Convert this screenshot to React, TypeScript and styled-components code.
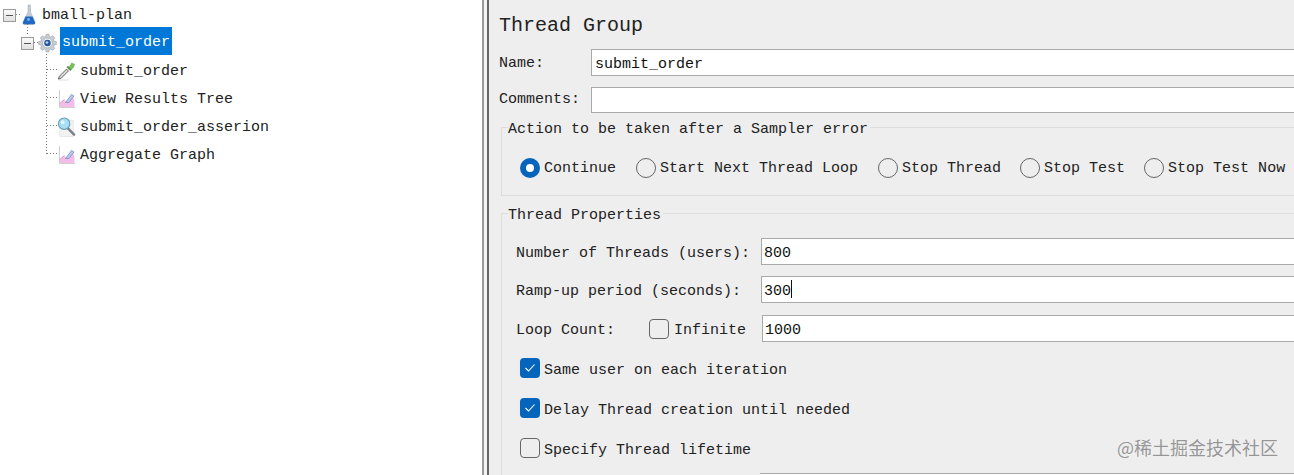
import React from 'react';
import styled, { createGlobalStyle } from 'styled-components';

const Global = createGlobalStyle`
  html, body { margin: 0; padding: 0; width: 1294px; height: 475px; overflow: hidden; background: #fff; }
  * { box-sizing: border-box; }
`;
const Page = styled.div`
  display: flex; width: 1294px; height: 475px; overflow: hidden;
  font-family: "Liberation Mono", "DejaVu Sans Mono", monospace; font-size: 15px; color: #222;
`;
const TreePane = styled.div`
  width: 482px; flex: none; background: #fff; padding-top: 1px; position: relative;
`;
const Divider = styled.div`
  width: 7px; flex: none; background: #f4f4f4; border-left: 2px solid #999; border-right: 2px solid #666;
`;
const TreeRow = styled.div<{ $indent: number }>`
  height: 28px; display: flex; align-items: center; padding-left: ${p => p.$indent}px; white-space: nowrap;
`;
const Expander = styled.span<{ $mr: number }>`
  width: 13px; height: 13px; border: 1px solid #9a9a9a; background: linear-gradient(#fafafa, #e0e0e0);
  display: flex; align-items: center; justify-content: center; flex: none; margin-right: ${p => p.$mr}px;
  &::before { content: ''; width: 7px; height: 1px; background: #555; }
`;
const IconBox = styled.span`
  width: 19px; height: 22px; flex: none; display: flex; align-items: center; justify-content: center; margin-right: 4px;
`;
const Selected = styled.span`
  background: #0078d7; color: #fff; height: 28px; line-height: 32px; padding: 0 2px; margin: -2px 0 0 -1px; align-self: flex-start; overflow: hidden;
`;
const Guides = styled.div`
  position: absolute; left: 0; top: 0; width: 70px; height: 170px; pointer-events: none;
`;
const FormPane = styled.div`
  flex: 1; min-width: 0; background: #eee; padding: 15px 0 0 10px;
`;
const Title = styled.div`
  font-size: 20px; line-height: 22px; height: 22px; color: #222;
`;
const Row = styled.div<{ $mt: number }>`
  display: flex; align-items: center; margin-top: ${p => p.$mt}px;
`;
const Label = styled.span<{ $w: number; $pb?: number; $pt?: number }>`
  width: ${p => p.$w}px; flex: none; white-space: nowrap;
  padding-bottom: ${p => p.$pb ?? 0}px; padding-top: ${p => p.$pt ?? 0}px;
`;
const Field = styled.div<{ $h: number; $pl?: number }>`
  flex: 1; height: ${p => p.$h}px; background: #fff; border: 1px solid #a9a9a9; border-right: none;
  padding-left: ${p => p.$pl ?? 3}px; line-height: ${p => p.$h + 3}px; font-size: 15px; color: #111; white-space: nowrap;
`;
const Caret = styled.span`
  display: inline-block; width: 1px; height: 18px; background: #111; vertical-align: middle; margin-top: -4px;
`;
const Group = styled.div<{ $mt: number; $h: number }>`
  position: relative; margin: ${p => p.$mt}px 0 0 2px; height: ${p => p.$h}px;
  border: 1px solid #ddd; border-right: none;
`;
const Legend = styled.span`
  position: absolute; left: 6px; top: -7px; line-height: 18px; background: #eee; padding-right: 2px; white-space: nowrap; color: #222;
`;
const RadioRow = styled.div`
  display: flex; align-items: center; padding: 30px 0 0 18px; white-space: nowrap;
`;
const RadioItem = styled.label<{ $mr: number }>`
  display: flex; align-items: center; margin-right: ${p => p.$mr}px;
`;
const Radio = styled.span<{ $on?: boolean }>`
  width: 20px; height: 20px; border-radius: 50%; flex: none; margin-right: 4px;
  ${p => p.$on
    ? 'background: #fff; border: 6px solid #0565bd;'
    : 'border: 1px solid #666; background: #eee;'}
`;
const Check = styled.span<{ $on?: boolean }>`
  width: 20px; height: 20px; border-radius: 4px; flex: none; margin-right: 4px;
  display: flex; align-items: center; justify-content: center;
  ${p => p.$on ? 'background: #0565bd;' : 'border: 1px solid #666; background: #eee;'}
`;
const PropRow = styled.div<{ $mt: number }>`
  display: flex; align-items: center; margin-top: ${p => p.$mt}px; padding-left: 14px; white-space: nowrap;
`;
const PropLabel = styled.span`
  width: 245px; flex: none; padding-top: 4px;
`;
const LoopLabel = styled.span`
  width: 133px; flex: none; padding-top: 4px;
`;
const InfiniteLabel = styled.span`
  width: 88px; flex: none; margin-left: 1px; padding-top: 4px;
`;
const CheckRow = styled.div<{ $mt: number }>`
  display: flex; align-items: center; margin-top: ${p => p.$mt}px; padding-left: 18px; white-space: nowrap; height: 20px;
`;
const CheckText = styled.span`
  padding-top: 4px;
`;
const BottomField = styled.div`
  height: 10px; margin: 15px 0 0 258px; background: #fff; border-top: 1px solid #a9a9a9;
`;
const Watermark = styled.span`
  position: absolute; right: 16px; bottom: 16px; font-family: "Noto Sans CJK SC", sans-serif; font-size: 18px; line-height: 24px;
  color: rgba(90,90,90,.6); pointer-events: none;
`;

const Flask = () => (
  <svg width="18" height="22" viewBox="0 0 18 22">
    <path d="M8 1h2.500v7l4.500 10c.5 1.500-.5 2.500-1.500 2.500H4.500c-1 0-2-1-1.500-2.500l5-10z" fill="#c5ccd6" stroke="#a8b0ba" strokeWidth=".6" />
    <path d="M5.500 12.500h7l2.500 6c.3 1-.2 1.700-1 1.700H4c-.8 0-1.300-.7-1-1.700z" fill="#1f68c4" />
    <circle cx="8.500" cy="15.500" r="1.400" fill="#7fb0ea" />
  </svg>
);
const Gear = () => (
  <svg width="20" height="20" viewBox="0 0 20 20">
    <path fill="#c9ced6" stroke="#959ba3" strokeWidth=".6" d="M8.500.8h3l.4 2.300 1.700.7 1.900-1.300 2.100 2.100-1.300 1.900.7 1.700 2.300.4v3l-2.300.4-.7 1.700 1.300 1.900-2.100 2.100-1.900-1.300-1.700.7-.4 2.300h-3l-.4-2.300-1.700-.7-1.900 1.300-2.100-2.100 1.300-1.900-.7-1.700-2.300-.4v-3l2.300-.4.7-1.700-1.300-1.900 2.100-2.100 1.900 1.300 1.700-.7z" />
    <circle cx="10" cy="10" r="5.200" fill="#eef1f5" stroke="#8e949c" strokeWidth=".5" />
    <circle cx="10" cy="10" r="3.400" fill="#27579a" />
    <circle cx="9.500" cy="9.500" r="1.400" fill="#bcd4f0" />
  </svg>
);
const Dropper = () => (
  <svg width="20" height="20" viewBox="0 0 20 20">
    <path d="M1 19.500h11" stroke="#ddd" strokeWidth="1" />
    <path d="M1.500 18.500l1-3L10 8l2 2-7.500 7.500z" fill="#d8d8d8" stroke="#555" strokeWidth=".9" />
    <path d="M10 6l4 4 1.500-1.500-4-4z" fill="#5f8f4a" />
    <path d="M13 5.500l2.500-4 3 1.500-1 3-2.500 2.500z" fill="#79c25a" stroke="#5f9a48" strokeWidth=".5" />
  </svg>
);
const GraphIcon = () => (
  <svg width="18" height="20" viewBox="0 0 18 20">
    <path d="M1.500 1v17.500H17" fill="none" stroke="#cfcfcf" strokeWidth="1" />
    <path d="M2 18v-3.500l4-4 2.500 3 6-7 2 6V18z" fill="#f3bdea" />
    <path d="M2 14.500l4-4" fill="none" stroke="#b678bd" strokeWidth=".8" />
    <path d="M7.500 13.500l6-8 2.500 1.500-5 6.500z" fill="#bcc9ea" stroke="#6c82c0" strokeWidth=".7" />
  </svg>
);
const Magnifier = () => (
  <svg width="20" height="22" viewBox="0 0 20 22">
    <rect x="3" y="4" width="14" height="17" fill="#f2f2f2" stroke="#e0e0e0" strokeWidth=".7" />
    <path d="M11 12l7 7" stroke="#7b8088" strokeWidth="2.600" strokeLinecap="round" />
    <circle cx="7.500" cy="7.500" r="6" fill="#a6def5" stroke="#6a9ab3" strokeWidth="1.200" />
    <circle cx="6" cy="6" r="2" fill="#e2f6fd" />
  </svg>
);
const Tick = () => (
  <svg width="12" height="10" viewBox="0 0 12 10">
    <path d="M1.500 5l3 3 6-6.500" fill="none" stroke="#fff" strokeWidth="1.100" />
  </svg>
);
const TreeGuides = () => (
  <svg width="70" height="170" viewBox="0 0 70 170">
    <g stroke="#777" strokeWidth="1" strokeDasharray="1 2" fill="none">
      <path d="M27.500 24v10" />
      <path d="M46.500 54v100" />
      <path d="M47 69.500h10M47 97.500h10M47 125.500h10M47 153.500h10" />
      <path d="M16 14.500h4M34 42.500h4" />
    </g>
  </svg>
);

const radios = [
  { t: 'Continue', on: true, mr: 20 },
  { t: 'Start Next Thread Loop', mr: 20 },
  { t: 'Stop Thread', mr: 19 },
  { t: 'Stop Test', mr: 19 },
  { t: 'Stop Test Now', mr: 0 },
];

export default function App() {
  return (
    <Page>
      <Global />
      <TreePane>
        <Guides><TreeGuides /></Guides>
        <TreeRow $indent={3}><Expander $mr={3} /><IconBox><Flask /></IconBox>bmall-plan</TreeRow>
        <TreeRow $indent={21}><Expander $mr={4} /><IconBox><Gear /></IconBox><Selected>submit_order</Selected></TreeRow>
        <TreeRow $indent={57}><IconBox><Dropper /></IconBox>submit_order</TreeRow>
        <TreeRow $indent={57}><IconBox><GraphIcon /></IconBox>View Results Tree</TreeRow>
        <TreeRow $indent={57}><IconBox><Magnifier /></IconBox>submit_order_asserion</TreeRow>
        <TreeRow $indent={57}><IconBox><GraphIcon /></IconBox>Aggregate Graph</TreeRow>
      </TreePane>
      <Divider />
      <FormPane>
        <Title>Thread Group</Title>
        <Row $mt={12}><Label $w={92} $pt={2}>Name:</Label><Field $h={27}>submit_order</Field></Row>
        <Row $mt={11}><Label $w={92} $pb={2}>Comments:</Label><Field $h={26} /></Row>
        <Group $mt={14} $h={69}>
          <Legend>Action to be taken after a Sampler error</Legend>
          <RadioRow>
            {radios.map(r => (
              <RadioItem key={r.t} $mr={r.mr}><Radio $on={r.on} />{r.t}</RadioItem>
            ))}
          </RadioRow>
        </Group>
        <Group $mt={17} $h={270}>
          <Legend>Thread Properties</Legend>
          <PropRow $mt={24}><PropLabel>Number of Threads (users):</PropLabel><Field $h={27} $pl={2}>800</Field></PropRow>
          <PropRow $mt={11}><PropLabel>Ramp-up period (seconds):</PropLabel><Field $h={27} $pl={2}>300<Caret /></Field></PropRow>
          <PropRow $mt={12}>
            <LoopLabel>Loop Count:</LoopLabel><Check />
            <InfiniteLabel>Infinite</InfiniteLabel><Field $h={27} $pl={2}>1000</Field>
          </PropRow>
          <CheckRow $mt={16}><Check $on><Tick /></Check><CheckText>Same user on each iteration</CheckText></CheckRow>
          <CheckRow $mt={20}><Check $on><Tick /></Check><CheckText>Delay Thread creation until needed</CheckText></CheckRow>
          <CheckRow $mt={20}><Check /><CheckText>Specify Thread lifetime</CheckText></CheckRow>
          <BottomField />
        </Group>
      </FormPane>
      <Watermark>@稀土掘金技术社区</Watermark>
    </Page>
  );
}
